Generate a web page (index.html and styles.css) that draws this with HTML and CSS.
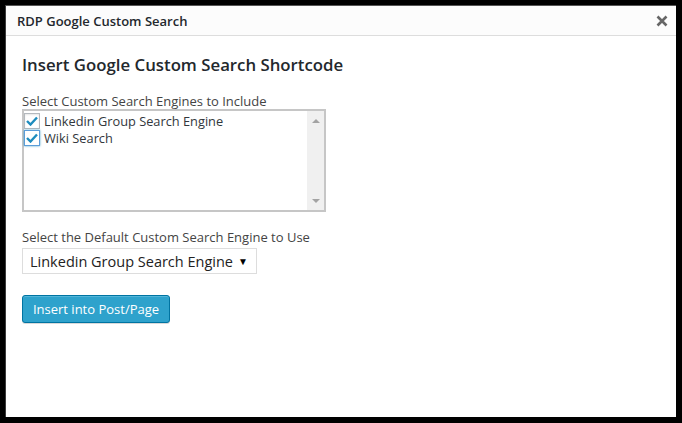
FILE: index.html
```html
<!DOCTYPE html>
<html>
<head>
<meta charset="utf-8">
<link rel="stylesheet" href="styles.css">
</head>
<body>
<div class="frame">
  <div class="dialog">
    <div class="header">
      <span class="title">RDP Google Custom Search</span>
      <span class="close">
        <svg width="12" height="12" viewBox="0 0 12 12"><path d="M1.5 1.5 L10.5 10.5 M10.5 1.5 L1.5 10.5" stroke="#666" stroke-width="2.6" stroke-linecap="butt"/></svg>
      </span>
    </div>
    <div class="content">
      <h2 class="heading">Insert Google Custom Search Shortcode</h2>
      <div class="label">Select Custom Search Engines to Include</div>
      <div class="listbox">
        <div class="items">
          <div class="item"><span class="cb"><svg width="12" height="10" viewBox="0 0 12 10"><path d="M1 5 L4.5 8.5 L11 1.5" fill="none" stroke="#1e8cbe" stroke-width="2.4"/></svg></span>Linkedin Group Search Engine</div>
          <div class="item"><span class="cb focus"><svg width="12" height="10" viewBox="0 0 12 10"><path d="M1 5 L4.5 8.5 L11 1.5" fill="none" stroke="#1e8cbe" stroke-width="2.4"/></svg></span>Wiki Search</div>
        </div>
        <div class="scroll">
          <span class="arr up"></span>
          <span class="arr down"></span>
        </div>
      </div>
      <div class="label label2">Select the Default Custom Search Engine to Use</div>
      <div class="select"><span class="seltext">Linkedin Group Search Engine</span><span class="caret">▼</span></div>
      <button class="btn">Insert into Post/Page</button>
    </div>
  </div>
</div>
</body>
</html>
```
FILE: styles.css
```css
html, body {
  margin: 0;
  padding: 0;
  background: #000;
  width: 682px;
  height: 423px;
  overflow: hidden;
  font-family: "Open Sans", "Noto Sans", sans-serif;
}
.frame {
  box-sizing: border-box;
  width: 682px;
  height: 423px;
  padding: 5px 6px 6px 5px;
  display: flex;
}
.dialog {
  flex: 1;
  background: #fff;
  border-top: 1px solid #555;
  border-left: 1px solid #3c3c3c;
  display: flex;
  flex-direction: column;
}
.header {
  height: 29px;
  background: #fcfcfc;
  border-bottom: 1px solid #dddddd;
  display: flex;
  align-items: center;
  justify-content: space-between;
  padding: 0 8px 0 11px;
}
.title {
  font-size: 13px;
  font-weight: 600;
  color: #23282d;
}
.close {
  display: flex;
  width: 12px;
  height: 12px;
}
.content {
  padding: 17px 16px 0 16px;
  display: flex;
  flex-direction: column;
  align-items: flex-start;
}
.heading {
  margin: 0;
  font-size: 16.8px;
  font-weight: 600;
  color: #23282d;
  line-height: 24px;
}
.label {
  margin-top: 17px;
  font-size: 13px;
  color: #444;
  line-height: 15px;
}
.listbox {
  margin-top: 0;
  box-sizing: border-box;
  width: 304px;
  height: 103px;
  border: 2px solid #c6c6c6;
  display: flex;
  background: #fff;
}
.items {
  flex: 1;
  padding-top: 1px;
}
.item {
  display: flex;
  align-items: center;
  height: 17px;
  font-size: 12.8px;
  color: #32373c;
  gap: 4px;
  white-space: nowrap;
}
.cb {
  box-sizing: border-box;
  width: 16px;
  height: 16px;
  border: 1px solid #b4b9be;
  background: #fff;
  display: flex;
  align-items: center;
  justify-content: center;
  box-shadow: inset 0 1px 2px rgba(0,0,0,.1);
}
.cb.focus {
  border-color: #5b9dd9;
  box-shadow: 0 0 2px rgba(30,140,190,.8);
}
.scroll {
  width: 17px;
  background: #f0f0f0;
  position: relative;
}
.arr {
  position: absolute;
  left: 5px;
  width: 0;
  height: 0;
  border-left: 4px solid transparent;
  border-right: 4px solid transparent;
}
.arr.up {
  top: 8px;
  border-bottom: 4px solid #a3a3a3;
}
.arr.down {
  bottom: 7px;
  border-top: 4px solid #a3a3a3;
}
.label2 {
  margin-top: 18px;
}
.select {
  margin-top: 3px;
  box-sizing: border-box;
  width: 235px;
  height: 26px;
  border: 1px solid #ddd;
  display: flex;
  align-items: center;
  justify-content: space-between;
  padding: 0 8px 0 7px;
  font-size: 14.5px;
  color: #222;
  white-space: nowrap;
}
.caret {
  font-size: 10px;
  color: #000;
}
.btn {
  margin-top: 21px;
  box-sizing: border-box;
  width: 148px;
  height: 28px;
  background: #2ea2cc;
  border: 1px solid #0074a2;
  border-radius: 3px;
  color: #fff;
  font-family: "Open Sans", "Noto Sans", sans-serif;
  font-size: 13px;
  padding: 0;
  box-shadow: inset 0 1px 0 rgba(120,200,230,.5), 0 1px 0 rgba(0,0,0,.15);
}
```
